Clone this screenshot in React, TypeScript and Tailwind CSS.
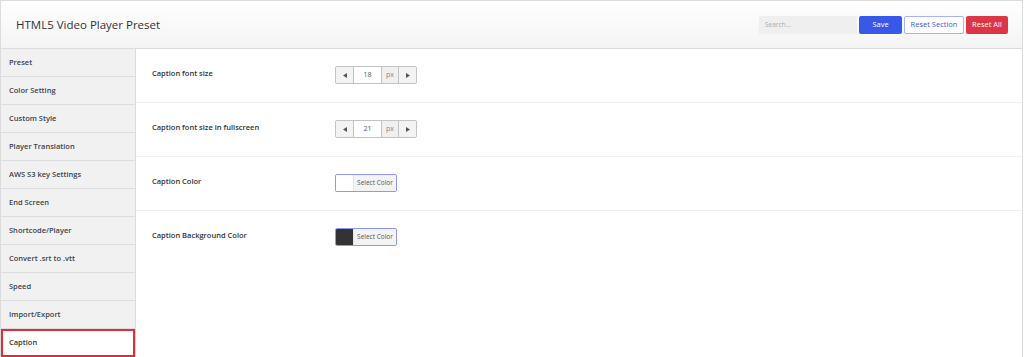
import React from "react";

const items = [
  "Preset",
  "Color Setting",
  "Custom Style",
  "Player Translation",
  "AWS S3 key Settings",
  "End Screen",
  "Shortcode/Player",
  "Convert .srt to .vtt",
  "Speed",
  "Import/Export",
  "Caption",
];

function Stepper({ value }: { value: string }) {
  return (
    <div className="flex h-[18px] w-[82px] overflow-hidden rounded-[2px] border border-[#c3c3c3] text-[7px] text-[#555]">
      <div className="flex w-[17px] items-center justify-center bg-[#f3f3f3]">
        <svg width="4" height="5" viewBox="0 0 4 5"><path d="M4 0L0 2.5L4 5Z" fill="#555" /></svg>
      </div>
      <div className="flex flex-1 items-center justify-center border-x border-[#c3c3c3] bg-white">{value}</div>
      <div className="flex w-[17px] items-center justify-center border-r border-[#c3c3c3] bg-[#f0f0f0] text-[#888]">px</div>
      <div className="flex w-[17px] items-center justify-center bg-[#f3f3f3]">
        <svg width="4" height="5" viewBox="0 0 4 5"><path d="M0 0L4 2.5L0 5Z" fill="#555" /></svg>
      </div>
    </div>
  );
}

function ColorPick({ color }: { color: string }) {
  return (
    <div className="flex h-[18px] w-[62px] overflow-hidden rounded-[2px] border border-[#8e97f2]">
      <div className="w-[17px]" style={{ background: color }} />
      <div className="flex flex-1 items-center justify-center border-l border-[#e5e5e5] bg-[#f3f3f3] text-[6.5px] text-[#555]">Select Color</div>
    </div>
  );
}

export default function App() {
  const rows: { label: string; el: React.ReactNode }[] = [
    { label: "Caption font size", el: <Stepper value="18" /> },
    { label: "Caption font size in fullscreen", el: <Stepper value="21" /> },
    { label: "Caption Color", el: <ColorPick color="#ffffff" /> },
    { label: "Caption Background Color", el: <ColorPick color="#333333" /> },
  ];
  return (
    <div className="h-[357px] w-[1024px] overflow-hidden bg-white" style={{ fontFamily: '"Open Sans", "Noto Sans", sans-serif' }}>
      <div className="mr-[1px] h-[357px] border-l border-r border-t border-[#dcdcde]">
        <div className="flex h-[48px] items-center justify-between border-b border-[#dcdcde] bg-gradient-to-b from-white to-[#f4f4f4] pl-[15px] pr-[14px]">
          <div className="text-[11.5px] text-[#333]">HTML5 Video Player Preset</div>
          <div className="flex items-center gap-[2px]">
            <div className="flex h-[18px] w-[98px] items-center bg-[#efefef] px-[6px] text-[6.5px] text-[#aaa]">Search...</div>
            <div className="flex h-[18px] w-[43px] items-center justify-center rounded-[2px] bg-[#3858e9] text-[7.5px] text-white">Save</div>
            <div className="flex h-[18px] w-[60px] items-center justify-center rounded-[2px] border border-[#a8b3f5] bg-white text-[7.5px] text-[#3858e9]">Reset Section</div>
            <div className="flex h-[18px] w-[42px] items-center justify-center rounded-[2px] bg-[#dc3545] text-[7.5px] text-white">Reset All</div>
          </div>
        </div>
        <div className="flex">
          <div className="w-[135px] border-r border-[#dcdcde] bg-[#f1f1f1]">
            {items.map((it) => {
              const active = it === "Caption";
              return active ? (
                <div key={it} className="flex h-[28px] items-center border-2 border-[#e32c3b] bg-white pl-[6px] text-[7.5px] font-semibold text-[#333]">
                  {it}
                </div>
              ) : (
                <div key={it} className="flex h-[28px] items-center border-b border-[#dcdcde] pl-[8px] text-[7.5px] font-semibold text-[#3c434a]">
                  {it}
                </div>
              );
            })}
          </div>
          <div className="flex-1">
            {rows.map((r, i) => (
              <div key={i} className={`flex h-[54px] items-start pt-[17px] ${i < 3 ? "border-b border-[#f0f0f0]" : ""}`}>
                <div className="w-[199px] pl-[16px] pt-[1px] text-[7.5px] font-semibold leading-[12px] text-[#333]">{r.label}</div>
                {r.el}
              </div>
            ))}
          </div>
        </div>
      </div>
    </div>
  );
}
